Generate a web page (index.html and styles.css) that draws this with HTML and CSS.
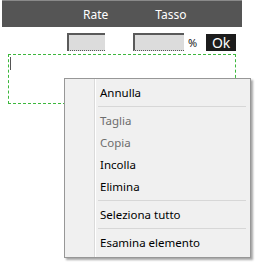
FILE: index.html
```html
<!DOCTYPE html>
<html>
<head>
<meta charset="utf-8">
<link rel="stylesheet" href="styles.css">
</head>
<body>
<div class="page">
  <div class="header">
    <span class="h-rate">Rate</span>
    <span class="h-tasso">Tasso</span>
  </div>
  <div class="inputs">
    <div class="field f-rate"></div>
    <div class="field f-tasso"></div>
    <span class="pct">%</span>
    <button class="ok">Ok</button>
  </div>
  <div class="editor"><span class="caret"></span></div>
</div>
<div class="menu">
  <div class="item">Annulla</div>
  <div class="sep"></div>
  <div class="item disabled">Taglia</div>
  <div class="item disabled">Copia</div>
  <div class="item">Incolla</div>
  <div class="item">Elimina</div>
  <div class="sep"></div>
  <div class="item">Seleziona tutto</div>
  <div class="sep"></div>
  <div class="item">Esamina elemento</div>
</div>
</body>
</html>
```
FILE: styles.css
```css
html, body {
  margin: 0;
  padding: 0;
  background: #fff;
  font-family: "Noto Sans", "Open Sans", sans-serif;
}
.page {
  width: 255px;
  height: 263px;
}
.header {
  margin-left: 2px;
  width: 240px;
  height: 27px;
  background: #555555;
  border-top: 1px solid #8a8a8a;
  box-sizing: border-box;
  display: flex;
  align-items: center;
  color: #fff;
  font-size: 12px;
}
.h-rate {
  margin-left: 81px;
}
.h-tasso {
  margin-left: 47px;
}
.inputs {
  display: flex;
  align-items: flex-start;
  height: 30px;
  padding-top: 6px;
  box-sizing: border-box;
}
.field {
  height: 18px;
  background: #dcdcdc;
  border-top: 2px solid #5a5a5a;
  border-left: 2px solid #5a5a5a;
  border-bottom: 1px dotted #555;
  box-sizing: border-box;
}
.f-rate {
  margin-left: 67px;
  width: 38px;
}
.f-tasso {
  margin-left: 28px;
  width: 51px;
}
.pct {
  margin-left: 4px;
  margin-top: 3px;
  font-size: 11px;
  color: #222;
  line-height: 14px;
}
.ok {
  margin-left: 9px;
  margin-top: 1px;
  width: 30px;
  height: 17px;
  padding: 0;
  border: none;
  background: #1c1c1c;
  color: #fff;
  font-family: "Noto Sans", sans-serif;
  font-size: 14px;
  line-height: 17px;
}
.editor {
  position: relative;
  margin-left: 8px;
  margin-top: -3px;
  width: 228px;
  height: 50px;
  border: 1px dashed #3cb83c;
  box-sizing: border-box;
}
.caret {
  position: absolute;
  left: 1px;
  top: 2px;
  width: 1px;
  height: 13px;
  background: #555;
}
.menu {
  position: absolute;
  left: 64px;
  top: 78px;
  width: 187px;
  height: 180px;
  box-sizing: border-box;
  background: #f0f0f0;
  border: 1px solid #979797;
  box-shadow: 2px 2px 2px rgba(0,0,0,0.35);
  padding: 3px 2px 3px 2px;
  background-image: linear-gradient(to right, transparent 29px, #dadada 29px, #dadada 30px, #fff 30px, #fff 31px, transparent 31px);
}
.item {
  height: 22px;
  line-height: 22px;
  padding-left: 33px;
  font-size: 11.5px;
  color: #000;
}
.item.disabled {
  color: #6d6d6d;
}
.sep {
  height: 1px;
  margin: 2px 2px 3px 31px;
  background: #d7d7d7;
}
```
